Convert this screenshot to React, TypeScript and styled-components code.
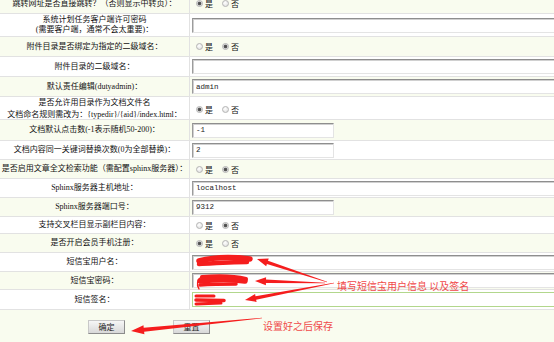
import React from "react";
import styled, { createGlobalStyle } from "styled-components";

const Global = createGlobalStyle`
  html, body { margin: 0; padding: 0; overflow: hidden; background: #fff; }
  body { font-family: "Liberation Serif", "Noto Sans CJK SC", serif; color: #111; }
`;

const Page = styled.div`
  position: relative;
  width: 554px;
  height: 342px;
  overflow: hidden;
`;

const Form = styled.div`
  margin-top: -6px;
  width: 554px;
`;

const Row = styled.div<{ $alt?: boolean; $h: number }>`
  display: grid;
  grid-template-columns: 190px 1fr;
  height: ${(p) => p.$h}px;
  background: ${(p) => (p.$alt ? "#F9FCEF" : "#FFFFFF")};
  border-bottom: 1px solid #e2e2e2;
`;

const Label = styled.div`
  border-right: 1px solid #e2e2e2;
  display: flex;
  flex-direction: column;
  align-items: center;
  justify-content: center;
  text-align: center;
  font-size: 8px;
  line-height: 10px;
  white-space: nowrap;
`;

const Line = styled.span<{ $lh?: number }>`
  display: block;
  line-height: ${(p) => p.$lh ?? 10}px;
`;

const Field = styled.div`
  display: flex;
  align-items: center;
  padding-left: 2px;
  overflow: hidden;
`;

const TextInput = styled.input<{ $short?: boolean; $focus?: boolean }>`
  box-sizing: border-box;
  flex: none;
  width: ${(p) => (p.$short ? "142px" : "420px")};
  height: 15px;
  margin: 0;
  padding: 0 3px;
  font-family: "Liberation Mono", monospace;
  font-size: 7.5px;
  color: #222;
  background: #fff;
  outline: none;
  border: 1px solid;
  border-color: ${(p) => (p.$focus ? "#b2d78c #b2d78c #b2d78c #b2d78c" : "#8e8e8e #e4e4e4 #e4e4e4 #9c9c9c")};
  box-shadow: ${(p) => (p.$focus ? "none" : "inset 1px 1px 0 #d0d0d0")};
`;

const RadioGroup = styled.div`
  display: flex;
  align-items: center;
  padding-left: 4px;
  gap: 3px;
  font-size: 8px;
`;

const RadioLabel = styled.label`
  display: flex;
  align-items: center;
  gap: 2px;
  margin-right: 6px;
`;

const Radio = styled.input`
  appearance: none;
  -webkit-appearance: none;
  margin: 0;
  width: 7px;
  height: 7px;
  border-radius: 50%;
  border: 1px solid #b4b4b4;
  background: radial-gradient(circle at 40% 35%, #ffffff 0, #e2e2e2 80%);
  &:checked {
    background: radial-gradient(circle, #4a4a4a 0, #5a5a5a 1.4px, #dcdcdc 2.2px, #eeeeee 100%);
  }
`;

const ButtonRow = styled.div`
  height: 32px;
  background: #F9FCEF;
  display: flex;
  align-items: flex-start;
  padding-top: 10px;
  padding-left: 88px;
  gap: 48px;
  box-sizing: border-box;
`;

const Button = styled.button`
  width: 37px;
  height: 14px;
  padding: 0;
  font-family: "Noto Sans CJK SC", sans-serif;
  font-size: 8px;
  line-height: 12px;
  color: #222;
  border: 1px solid;
  border-color: #c8c8c8 #8c8c8c #8c8c8c #c8c8c8;
  background: linear-gradient(#f6f6f6, #d8d8d8);
`;

const Overlay = styled.svg`
  position: absolute;
  left: 0;
  top: 0;
  pointer-events: none;
`;

const Note = styled.text`
  font-family: "Noto Sans CJK SC", sans-serif;
  font-size: 10px;
  fill: #f04a4a;
`;

type RowDef =
  | { kind: "radio"; label: string[]; yes: boolean; h: number; lh?: number }
  | { kind: "input"; label: string[]; value: string; short?: boolean; focus?: boolean; h: number };

const rows: RowDef[] = [
  { kind: "radio", label: ["跳转网址是否直接跳转？（否则显示中转页）："], yes: true, h: 19 },
  { kind: "input", label: ["系统计划任务客户端许可密码", "(需要客户端，通常不会太重要)："], value: "", h: 22 },
  { kind: "radio", label: ["附件目录是否绑定为指定的二级域名："], yes: false, h: 19 },
  { kind: "input", label: ["附件目录的二级域名："], value: "", h: 19 },
  { kind: "input", label: ["默认责任编辑(dutyadmin)："], value: "admin", h: 19 },
  { kind: "radio", label: ["是否允许用目录作为文档文件名", "文档命名规则需改为：{typedir}/{aid}/index.html："], yes: true, h: 22, lh: 12 },
  { kind: "input", label: ["文档默认点击数(-1表示随机50-200)："], value: "-1", short: true, h: 20 },
  { kind: "input", label: ["文档内容同一关键词替换次数(0为全部替换)："], value: "2", short: true, h: 18 },
  { kind: "radio", label: ["是否启用文章全文检索功能（需配置sphinx服务器）："], yes: false, h: 18 },
  { kind: "input", label: ["Sphinx服务器主机地址："], value: "localhost", h: 18 },
  { kind: "input", label: ["Sphinx服务器端口号："], value: "9312", short: true, h: 18 },
  { kind: "radio", label: ["支持交叉栏目显示副栏目内容："], yes: false, h: 16 },
  { kind: "radio", label: ["是否开启会员手机注册："], yes: true, h: 18 },
  { kind: "input", label: ["短信宝用户名："], value: "", h: 18 },
  { kind: "input", label: ["短信宝密码："], value: "", h: 17 },
  { kind: "input", label: ["短信签名："], value: "", focus: true, h: 19 },
];

function arrow(tx: number, ty: number, px: number, py: number, head = 11, hw = 4, sw = 1.8) {
  const dx = px - tx;
  const dy = py - ty;
  const len = Math.hypot(dx, dy);
  const ux = dx / len;
  const uy = dy / len;
  const nx = -uy;
  const ny = ux;
  const hx = px - ux * head;
  const hy = py - uy * head;
  const pts = [
    [tx + nx * 0.3, ty + ny * 0.3],
    [hx + nx * sw, hy + ny * sw],
    [hx + nx * hw, hy + ny * hw],
    [px, py],
    [hx - nx * hw, hy - ny * hw],
    [hx - nx * sw, hy - ny * sw],
    [tx - nx * 0.3, ty - ny * 0.3],
  ];
  return pts.map(([a, b]) => `${a.toFixed(1)},${b.toFixed(1)}`).join(" ");
}

export default function App() {
  return (
    <Page>
      <Global />
      <Form>
        {rows.map((r, i) => (
          <Row key={i} $alt={i % 2 === 0} $h={r.h}>
            <Label>
              {r.label.map((l, j) => (
                <Line key={j} $lh={r.kind === "radio" ? r.lh : undefined}>
                  {l}
                </Line>
              ))}
            </Label>
            <Field>
              {r.kind === "radio" ? (
                <RadioGroup>
                  <RadioLabel>
                    <Radio type="radio" name={`r${i}`} defaultChecked={r.yes} />
                    是
                  </RadioLabel>
                  <RadioLabel>
                    <Radio type="radio" name={`r${i}`} defaultChecked={!r.yes} />
                    否
                  </RadioLabel>
                </RadioGroup>
              ) : (
                <TextInput type="text" defaultValue={r.value} $short={r.short} $focus={r.focus} />
              )}
            </Field>
          </Row>
        ))}
        <ButtonRow>
          <Button type="button">确定</Button>
          <Button type="button">重置</Button>
        </ButtonRow>
      </Form>
      <Overlay width="554" height="342" viewBox="0 0 554 342">
        <g stroke="#f51d1d" strokeLinecap="round" strokeLinejoin="round" fill="none">
          <path d="M199 261 C214 257 234 257 250 259" strokeWidth="5.5" />
          <path d="M199 264 C216 263 232 262 247 262" strokeWidth="4.5" />
          <path d="M202 277 C216 276 234 276 246 279" strokeWidth="4" />
          <path d="M200 281 C216 279 232 279 245 281" strokeWidth="5.5" />
          <path d="M200 285 C214 284 226 284 236 284" strokeWidth="3.5" />
          <path d="M201 277 Q195 282 199 289" strokeWidth="1.4" />
          <path d="M196 296 L214 296" strokeWidth="3" />
          <path d="M196 300 L224 300.5" strokeWidth="3.5" />
          <path d="M196 304 L221 303" strokeWidth="3" />
        </g>
        <g fill="#f51d1d">
          <polygon points={arrow(327, 282, 257, 259)} />
          <polygon points={arrow(325, 283, 255, 281)} />
          <polygon points={arrow(334, 283, 245, 300)} />
          <polygon points={arrow(262, 318, 131, 331, 13, 4.5, 2)} />
        </g>
        <Note x="337" y="290">填写短信宝用户信息 以及签名</Note>
        <Note x="263" y="330">设置好之后保存</Note>
      </Overlay>
    </Page>
  );
}
